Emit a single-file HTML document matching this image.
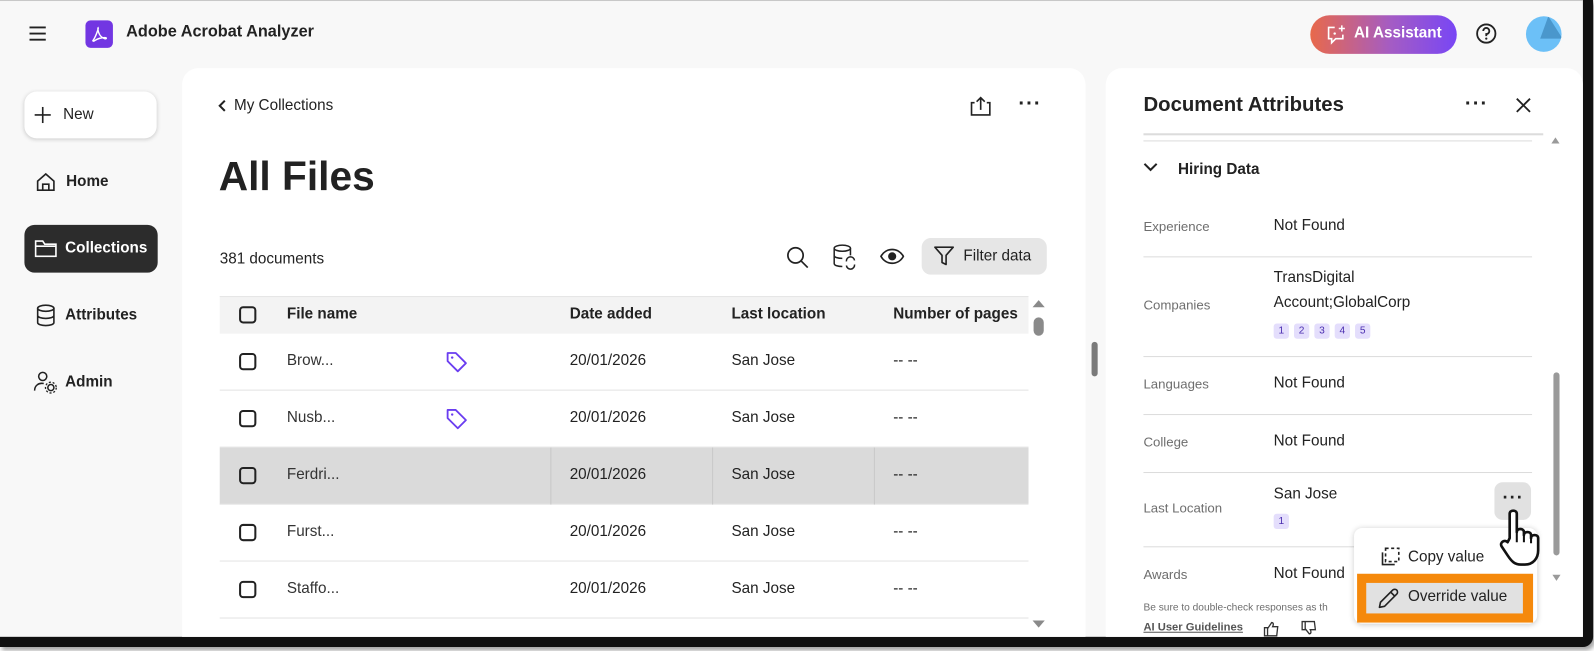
<!DOCTYPE html>
<html><head><meta charset="utf-8"><style>
*{box-sizing:border-box;margin:0;padding:0}
body{width:1594px;height:649px;background:#fff;font-family:"Liberation Sans",sans-serif;color:#222;position:relative;overflow:hidden}
.wrap{position:absolute;left:0;top:0;width:1570px;height:640px;transform:scale(1.0173);transform-origin:0 0}
.frame{position:absolute;left:0;top:0;width:1566px;height:636px;background:#111;border-radius:0 0 10px 0;box-shadow:2px 3px 4px rgba(0,0,0,.35)}
.app{position:absolute;left:0;top:0;width:1556px;height:626px;background:#f8f8f8;border-top:1px solid #c8c8c8;overflow:hidden}
.a{position:absolute;white-space:nowrap}
.panel{position:absolute;background:#fff;border-radius:16px}
.cb{position:absolute;width:17px;height:17px;border:2px solid #222;border-radius:4px}
.row{position:absolute;left:216px;width:795px;height:56px;border-bottom:1px solid #e3e3e3}
.t15{font-size:15px}
.lab{font-size:13px;color:#6e6e6e}
.val{font-size:15px;color:#222}
.hr{position:absolute;left:1124px;width:382px;height:1px;background:#dcdcdc}
.bd{display:inline-block;width:15px;height:15px;background:#e4defc;color:#4b2fb0;font-size:10px;text-align:center;line-height:15px;border-radius:3px;margin-right:5px}
</style></head><body>
<div class="wrap">
<div class="frame"></div>
<div class="app">
<svg class="a" style="left:28px;top:24px" width="18" height="16"><path d="M1 2h16M1 8h16M1 14h16" stroke="#222" stroke-width="1.8"/></svg>
<div class="a" style="left:84px;top:19px;width:27px;height:27px;background:#7236e2;border-radius:5px"></div>
<svg class="a" style="left:88px;top:23px" width="19" height="19" viewBox="0 0 19 19"><path d="M9 3c-1 0-1 2 0 5s3 5 6 6c2 .5 2-1 0-1-3 0-7 1-10 3-2 1-2 0-1-1 2-3 3-6 4-9 .3-1 .6-3 1-3" fill="none" stroke="#fff" stroke-width="1.4"/></svg>
<div class="a" style="left:124px;top:22px;font-size:16px;font-weight:bold;color:#222">Adobe Acrobat Analyzer</div>
<div class="a" style="left:1288px;top:14px;width:144px;height:38px;border-radius:19px;background:linear-gradient(90deg,#e8694b,#a45cc4 55%,#7846f5)"></div>
<svg class="a" style="left:1303px;top:22px" width="22" height="22" viewBox="0 0 22 22"><path d="M9 4H3v11h3v4l4-4h7v-4" fill="none" stroke="#fff" stroke-width="1.6"/><path d="M16 2v6M13 5h6" stroke="#fff" stroke-width="1.5"/><circle cx="9" cy="10" r="1.2" fill="#fff"/></svg>
<div class="a" style="left:1331px;top:23px;font-size:15px;font-weight:bold;color:#fff">AI Assistant</div>
<svg class="a" style="left:1450px;top:21px" width="22" height="22"><circle cx="11" cy="11" r="9" fill="none" stroke="#222" stroke-width="1.8"/><path d="M8 8.5a3 3 0 1 1 3 3v2" fill="none" stroke="#222" stroke-width="1.8"/><circle cx="11" cy="16" r="1.1" fill="#222"/></svg>
<div class="a" style="left:1500px;top:15px;width:35px;height:35px;border-radius:50%;background:#6cc0f7;overflow:hidden"><div style="position:absolute;left:14px;top:0;width:0;height:0;border-left:8px solid transparent;border-right:14px solid transparent;border-bottom:22px solid #4a97cc"></div></div>
<div class="a" style="left:24px;top:89px;width:130px;height:46px;background:#fff;border-radius:12px;box-shadow:0 1px 4px rgba(0,0,0,.18)"></div>
<svg class="a" style="left:34px;top:104px" width="16" height="16"><path d="M8 0v16M0 8h16" stroke="#222" stroke-width="1.6"/></svg>
<div class="a t15" style="left:62px;top:103px">New</div>
<svg class="a" style="left:35px;top:168px" width="20" height="20"><path d="M2 9l8-7 8 7v9H2z M7 18v-6h6v6" fill="none" stroke="#222" stroke-width="1.6"/></svg>
<div class="a t15" style="left:65px;top:169px;font-weight:bold">Home</div>
<div class="a" style="left:24px;top:220px;width:131px;height:47px;background:#2c2c2c;border-radius:10px"></div>
<svg class="a" style="left:34px;top:234px" width="22" height="18"><path d="M1 2h7l2 3h11v12H1z M1 7h20" fill="none" stroke="#fff" stroke-width="1.6"/></svg>
<div class="a t15" style="left:64px;top:234px;font-weight:bold;color:#fff">Collections</div>
<svg class="a" style="left:36px;top:298px" width="18" height="22"><ellipse cx="9" cy="4" rx="8" ry="3" fill="none" stroke="#222" stroke-width="1.6"/><path d="M1 4v14c0 4 16 4 16 0V4M1 11c0 4 16 4 16 0" fill="none" stroke="#222" stroke-width="1.6"/></svg>
<div class="a t15" style="left:64px;top:300px;font-weight:bold">Attributes</div>
<svg class="a" style="left:33px;top:363px" width="24" height="24"><circle cx="9" cy="6" r="4" fill="none" stroke="#222" stroke-width="1.5"/><path d="M1 20c0-5 4-8 9-7" fill="none" stroke="#222" stroke-width="1.5"/><circle cx="17" cy="17" r="3" fill="none" stroke="#222" stroke-width="1.5"/><circle cx="17" cy="17" r="5.3" fill="none" stroke="#222" stroke-width="1.3" stroke-dasharray="2 1.8"/></svg>
<div class="a t15" style="left:64px;top:366px;font-weight:bold">Admin</div>
<div class="panel" style="left:179px;top:66px;width:888px;height:600px"></div>
<svg class="a" style="left:214px;top:96px" width="10" height="14"><path d="M7 2L2 7l5 5" fill="none" stroke="#222" stroke-width="2"/></svg>
<div class="a t15" style="left:230px;top:94px">My Collections</div>
<svg class="a" style="left:953px;top:92px" width="22" height="22"><path d="M5 8H2v12h18V8h-3M11 15V3M7 7l4-4 4 4" fill="none" stroke="#222" stroke-width="1.6"/></svg>
<div class="a" style="left:1001px;top:90px;font-size:20px;font-weight:bold;letter-spacing:1px">···</div>
<div class="a" style="left:215px;top:151px;font-size:40px;font-weight:bold;color:#222">All Files</div>
<div class="a t15" style="left:216px;top:245px">381 documents</div>
<svg class="a" style="left:772px;top:240px" width="24" height="24"><circle cx="10" cy="10" r="7.5" fill="none" stroke="#222" stroke-width="1.7"/><path d="M15.5 15.5L22 22" stroke="#222" stroke-width="1.7"/></svg>
<svg class="a" style="left:819px;top:239px" width="24" height="26"><ellipse cx="9" cy="4" rx="8" ry="3" fill="none" stroke="#222" stroke-width="1.5"/><path d="M1 4v15c0 2 4 3 8 3M1 11c0 2 4 3 8 3M17 4v7" fill="none" stroke="#222" stroke-width="1.5"/><path d="M13 17a4 4 0 0 1 8-1M21 20a4 4 0 0 1-8 1" fill="none" stroke="#222" stroke-width="1.5"/></svg>
<svg class="a" style="left:865px;top:242px" width="24" height="18"><path d="M1 9c5-9 17-9 22 0-5 9-17 9-22 0z" fill="none" stroke="#222" stroke-width="1.7"/><circle cx="12" cy="9" r="4" fill="#222"/></svg>
<div class="a" style="left:906px;top:233px;width:123px;height:36px;background:#e6e6e6;border-radius:9px"></div>
<svg class="a" style="left:918px;top:241px" width="20" height="20"><path d="M1 1h18l-7 8v9l-4-2V9z" fill="none" stroke="#222" stroke-width="1.6" stroke-linejoin="round"/></svg>
<div class="a t15" style="left:947px;top:242px">Filter data</div>
<div class="a" style="left:216px;top:290px;width:795px;height:37px;background:#f3f3f3;border-top:1px solid #e6e6e6"></div>
<div class="cb" style="left:235px;top:300px"></div>
<div class="a t15" style="left:282px;top:299px;font-weight:bold">File name</div>
<div class="a t15" style="left:560px;top:299px;font-weight:bold">Date added</div>
<div class="a t15" style="left:719px;top:299px;font-weight:bold">Last location</div>
<div class="a t15" style="left:878px;top:299px;font-weight:bold">Number of pages</div>
<div class="row" style="top:327px"></div>
<div class="row" style="top:383px"></div>
<div class="row" style="top:439px;background:#dadada"></div>
<div class="a" style="left:541px;top:439px;width:1px;height:56px;background:#c8c8c8"></div>
<div class="a" style="left:700px;top:439px;width:1px;height:56px;background:#c8c8c8"></div>
<div class="a" style="left:859px;top:439px;width:1px;height:56px;background:#c8c8c8"></div>
<div class="row" style="top:495px"></div>
<div class="row" style="top:551px"></div>
<div class="cb" style="left:235px;top:346px"></div><div class="a t15" style="left:282px;top:345px;color:#333">Brow...</div>
<div class="cb" style="left:235px;top:402px"></div><div class="a t15" style="left:282px;top:401px;color:#333">Nusb...</div>
<div class="cb" style="left:235px;top:458px"></div><div class="a t15" style="left:282px;top:457px;color:#333">Ferdri...</div>
<div class="cb" style="left:235px;top:514px"></div><div class="a t15" style="left:282px;top:513px;color:#333">Furst...</div>
<div class="cb" style="left:235px;top:570px"></div><div class="a t15" style="left:282px;top:569px;color:#333">Staffo...</div>
<svg class="a" style="left:438px;top:344px" width="22" height="22"><path d="M2 2h8l10 10-8 8L2 10z" fill="none" stroke="#6a3df0" stroke-width="1.8" stroke-linejoin="round"/><circle cx="6.5" cy="6.5" r="1.2" fill="#6a3df0"/></svg>
<svg class="a" style="left:438px;top:400px" width="22" height="22"><path d="M2 2h8l10 10-8 8L2 10z" fill="none" stroke="#6a3df0" stroke-width="1.8" stroke-linejoin="round"/><circle cx="6.5" cy="6.5" r="1.2" fill="#6a3df0"/></svg>
<div class="a t15" style="left:560px;top:345px">20/01/2026</div><div class="a t15" style="left:719px;top:345px">San Jose</div><div class="a t15" style="left:878px;top:345px">-- --</div>
<div class="a t15" style="left:560px;top:401px">20/01/2026</div><div class="a t15" style="left:719px;top:401px">San Jose</div><div class="a t15" style="left:878px;top:401px">-- --</div>
<div class="a t15" style="left:560px;top:457px">20/01/2026</div><div class="a t15" style="left:719px;top:457px">San Jose</div><div class="a t15" style="left:878px;top:457px">-- --</div>
<div class="a t15" style="left:560px;top:513px">20/01/2026</div><div class="a t15" style="left:719px;top:513px">San Jose</div><div class="a t15" style="left:878px;top:513px">-- --</div>
<div class="a t15" style="left:560px;top:569px">20/01/2026</div><div class="a t15" style="left:719px;top:569px">San Jose</div><div class="a t15" style="left:878px;top:569px">-- --</div>
<div class="a" style="left:1015px;top:294px;width:0;height:0;border:6px solid transparent;border-bottom:7px solid #8a8a8a;border-top:0"></div>
<div class="a" style="left:1016px;top:311px;width:10px;height:18px;background:#8a8a8a;border-radius:5px"></div>
<div class="a" style="left:1015px;top:609px;width:0;height:0;border:6px solid transparent;border-top:7px solid #8a8a8a;border-bottom:0"></div>
<div class="a" style="left:1073px;top:335px;width:6px;height:34px;background:#7a7a7a;border-radius:3px"></div>
<div class="panel" style="left:1087px;top:66px;width:469px;height:600px"></div>
<div class="a" style="left:1124px;top:91px;font-size:20px;font-weight:bold">Document Attributes</div>
<div class="a" style="left:1440px;top:90px;font-size:20px;font-weight:bold;letter-spacing:1px">···</div>
<svg class="a" style="left:1490px;top:95px" width="15" height="15"><path d="M1 1l13 13M14 1L1 14" stroke="#222" stroke-width="1.8"/></svg>
<div class="a" style="left:1124px;top:130px;width:393px;height:2px;background:#dcdcdc"></div>
<div class="hr" style="top:137px"></div>
<div class="a" style="left:1525px;top:134px;width:0;height:0;border:4px solid transparent;border-bottom:6px solid #9a9a9a;border-top:0"></div>
<svg class="a" style="left:1124px;top:159px" width="14" height="10"><path d="M1 1l6 6 6-6" fill="none" stroke="#222" stroke-width="2"/></svg>
<div class="a t15" style="left:1158px;top:157px;font-weight:bold">Hiring Data</div>
<div class="a lab" style="left:1124px;top:214px">Experience</div><div class="a val" style="left:1252px;top:212px">Not Found</div>
<div class="hr" style="top:251px"></div>
<div class="a lab" style="left:1124px;top:291px">Companies</div>
<div class="a val" style="left:1252px;top:263px">TransDigital</div>
<div class="a val" style="left:1252px;top:288px">Account;GlobalCorp</div>
<div class="a" style="left:1252px;top:314px"><span class="bd">1</span><span class="bd">2</span><span class="bd">3</span><span class="bd">4</span><span class="bd">5</span></div>
<div class="hr" style="top:349px"></div>
<div class="a lab" style="left:1124px;top:369px">Languages</div><div class="a val" style="left:1252px;top:367px">Not Found</div>
<div class="hr" style="top:406px"></div>
<div class="a lab" style="left:1124px;top:426px">College</div><div class="a val" style="left:1252px;top:424px">Not Found</div>
<div class="hr" style="top:463px"></div>
<div class="a lab" style="left:1124px;top:491px">Last Location</div><div class="a val" style="left:1252px;top:476px">San Jose</div>
<div class="a" style="left:1252px;top:501px"><span class="bd">1</span></div>
<div class="a" style="left:1469px;top:473px;width:36px;height:37px;background:#e1e1e1;border-radius:8px"></div>
<div class="a" style="left:1477px;top:478px;font-size:18px;font-weight:bold;letter-spacing:1px">···</div>
<div class="hr" style="top:536px;width:210px"></div>
<div class="a lab" style="left:1124px;top:556px">Awards</div><div class="a val" style="left:1252px;top:554px">Not Found</div>
<div class="a" style="left:1124px;top:591px;font-size:10px;color:#6e6e6e">Be sure to double-check responses as th</div>
<div class="a" style="left:1124px;top:610px;font-size:11px;font-weight:bold;color:#555;text-decoration:underline">AI User Guidelines</div>
<svg class="a" style="left:1242px;top:609px" width="16" height="16"><path d="M1 7h3v8H1zM4 8l4-6c2 0 2 2 1 4h5l-1 9H4" fill="none" stroke="#333" stroke-width="1.3"/></svg>
<svg class="a" style="left:1279px;top:609px" width="16" height="16"><path d="M1 1h3v8H1zM4 1h9l1 8H9c1 2 1 4-1 4L4 8" fill="none" stroke="#333" stroke-width="1.3"/></svg>
<div class="a" style="left:1527px;top:365px;width:6px;height:180px;background:#9a9a9a;border-radius:3px"></div>
<div class="a" style="left:1526px;top:564px;width:0;height:0;border:4px solid transparent;border-top:6px solid #9a9a9a;border-bottom:0"></div>
<div class="a" style="left:1331px;top:518px;width:180px;height:94px;background:#fff;border-radius:8px;box-shadow:0 1px 6px rgba(0,0,0,.2)"></div>
<svg class="a" style="left:1355px;top:537px" width="22" height="20"><path d="M7 1h13v13H7z" fill="none" stroke="#222" stroke-width="1.6" stroke-dasharray="3 2.5"/><path d="M4 5v12h12" fill="none" stroke="#222" stroke-width="1.6"/></svg>
<div class="a t15" style="left:1384px;top:538px">Copy value</div>
<div class="a" style="left:1334px;top:563px;width:173px;height:48px;background:#f5890c"></div>
<div class="a" style="left:1343px;top:572px;width:154px;height:30px;background:#e1e1e1"></div>
<svg class="a" style="left:1354px;top:576px" width="22" height="22"><path d="M2 20l1-5L15 3c1-1 3-1 4 0s1 3 0 4L7 19z M13 5l4 4" fill="none" stroke="#222" stroke-width="1.6" stroke-linejoin="round"/></svg>
<div class="a t15" style="left:1384px;top:577px">Override value</div>
<svg class="a" style="left:1470px;top:498px" width="56" height="60" viewBox="0 0 56 60"><path d="M14 30V6c0-4 7-4 7 0v18c0-4 7-4 7 0v3c0-4 7-4 7 0v3c0-4 7-4 7 0v12c0 8-5 14-13 14h-4c-6 0-9-3-13-9L6 38c-2-4 3-7 6-4z" fill="#fff" stroke="#111" stroke-width="2.6" stroke-linejoin="round"/><path d="M21 24v10M28 27v7M35 30v5" stroke="#111" stroke-width="2"/></svg>
</div>
</div>
</body></html>
